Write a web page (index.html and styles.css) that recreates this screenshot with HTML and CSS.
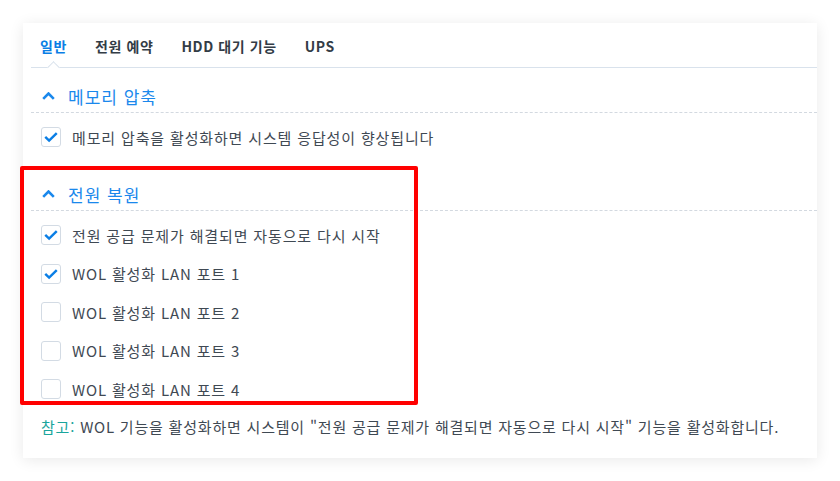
FILE: index.html
```html
<!DOCTYPE html>
<html lang="ko">
<head>
    <meta charset="UTF-8">
    <title>일반</title>
    <link rel="stylesheet" href="styles.css">
</head>
<body>

    <div class="card">
        <div class="tabs">
            <div class="tab active">일반</div>
            <div class="tab">전원 예약</div>
            <div class="tab">HDD 대기 기능</div>
            <div class="tab">UPS</div>
        </div>

        <div class="section">
            <div class="section-title">
                <svg class="chevron" width="13" height="8" viewBox="0 0 13 8"><polyline points="1.2,6.8 6.5,1.5 11.8,6.8" /></svg>
                <span>메모리 압축</span>
            </div>
            <div class="rows">
                <label class="row"><span class="box checked"><svg width="20" height="20" viewBox="0 0 20 20"><polyline points="3.6,9.8 7.9,14 16.4,5.6" /></svg></span>메모리 압축을 활성화하면 시스템 응답성이 향상됩니다</label>
            </div>
        </div>

        <div class="section power">
            <div class="highlight"></div>
            <div class="section-title">
                <svg class="chevron" width="13" height="8" viewBox="0 0 13 8"><polyline points="1.2,6.8 6.5,1.5 11.8,6.8" /></svg>
                <span>전원 복원</span>
            </div>
            <div class="rows">
                <label class="row"><span class="box checked"><svg width="20" height="20" viewBox="0 0 20 20"><polyline points="3.6,9.8 7.9,14 16.4,5.6" /></svg></span>전원 공급 문제가 해결되면 자동으로 다시 시작</label>
                <label class="row"><span class="box checked"><svg width="20" height="20" viewBox="0 0 20 20"><polyline points="3.6,9.8 7.9,14 16.4,5.6" /></svg></span>WOL 활성화 LAN 포트 1</label>
                <label class="row"><span class="box"></span>WOL 활성화 LAN 포트 2</label>
                <label class="row"><span class="box"></span>WOL 활성화 LAN 포트 3</label>
                <label class="row"><span class="box"></span>WOL 활성화 LAN 포트 4</label>
            </div>
        </div>

        <p class="note"><span class="note-label">참고:</span> WOL 기능을 활성화하면 시스템이 "전원 공급 문제가 해결되면 자동으로 다시 시작" 기능을 활성화합니다.</p>
    </div>

</body>
</html>
```

FILE: styles.css
```css
body {
    font-family: "Noto Sans CJK KR", "Noto Sans", sans-serif;
    background-color: #fff;
    margin: 0;
    padding: 23px;
    color: #3f4953;
}

.card {
    width: 794px;
    height: 435px;
    background-color: #fff;
    box-shadow: 0 2px 14px rgba(0, 0, 0, 0.09);
    padding-left: 8px;
    box-sizing: border-box;
}

.tabs {
    display: flex;
    gap: 28px;
    height: 45px;
    align-items: center;
    padding-left: 9px;
    border-bottom: 1px solid #d9e2ec;
    box-sizing: border-box;
}

.tab {
    position: relative;
    font-size: 14px;
    font-weight: bold;
    letter-spacing: 0.6px;
    color: #333c46;
    padding-top: 1px;
}

.tab.active {
    color: #0a7ee5;
}

.tab.active::after {
    content: "";
    position: absolute;
    left: 9px;
    top: 28px;
    width: 8px;
    height: 8px;
    background-color: #fff;
    border-top: 1px solid #d9e2ec;
    border-left: 1px solid #d9e2ec;
    transform: rotate(45deg);
}

.section-title {
    display: flex;
    align-items: center;
    gap: 13px;
    height: 24px;
    padding: 16px 0 4px 11px;
    border-bottom: 1px dashed #d3d9e0;
    font-size: 17px;
    letter-spacing: 1px;
    color: #1a88ec;
}

.chevron polyline {
    fill: none;
    stroke: #1a88ec;
    stroke-width: 2.6;
}

.rows {
    display: flex;
    flex-direction: column;
    gap: 18.6px;
    padding: 14px 0 0 10px;
}

.row {
    display: flex;
    align-items: center;
    gap: 11px;
    height: 20px;
    font-size: 15px;
    letter-spacing: 0.85px;
}

.box {
    width: 20px;
    height: 20px;
    border: 1px solid #d3dbe4;
    border-radius: 3px;
    box-sizing: border-box;
    display: flex;
    align-items: center;
    justify-content: center;
}

.box svg polyline {
    fill: none;
    stroke: #0a7ee5;
    stroke-width: 2.7;
}

.power {
    position: relative;
    margin-top: 19px;
}

.power .rows {
    padding-top: 14px;
}

.highlight {
    position: absolute;
    left: -11px;
    top: 0;
    width: 398px;
    height: 239px;
    border: 4px solid #ff0000;
    border-radius: 2px;
    box-sizing: border-box;
}

.note {
    margin: 17px 0 0 10px;
    font-size: 15px;
    letter-spacing: 0.79px;
}

.note-label {
    color: #1aa59c;
}
```
